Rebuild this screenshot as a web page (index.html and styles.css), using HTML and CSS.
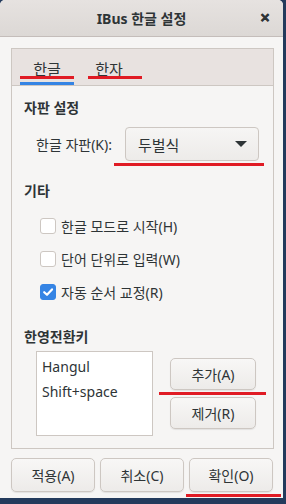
FILE: index.html
```html
<!DOCTYPE html>
<html lang="ko">
<head>
    <meta charset="UTF-8">
    <title>IBus 한글 설정</title>
    <link rel="stylesheet" href="styles.css">
</head>
<body>

<div class="window">
    <div class="titlebar">
        <span class="title">IBus 한글 설정</span>
        <span class="close">&#x2715;</span>
    </div>

    <div class="content">
        <div class="notebook">
            <div class="tabs">
                <div class="tab active marked">한글</div>
                <div class="tab marked">한자</div>
            </div>

            <div class="page">
                <h2>자판 설정</h2>
                <div class="row">
                    <span class="label">한글 자판(K):</span>
                    <div class="combo marked-wide">
                        <span>두벌식</span>
                        <span class="arrow"></span>
                    </div>
                </div>

                <h2 class="section">기타</h2>
                <ul class="checks">
                    <li><span class="box"></span>한글 모드로 시작(H)</li>
                    <li><span class="box"></span>단어 단위로 입력(W)</li>
                    <li><span class="box checked">
                        <svg width="12" height="12" viewBox="0 0 12 12"><path d="M2.2 6.2 L5 8.8 L10 3.4" fill="none" stroke="#fff" stroke-width="2.2" stroke-linecap="round" stroke-linejoin="round"/></svg>
                    </span>자동 순서 교정(R)</li>
                </ul>

                <h2 class="section keys">한영전환키</h2>
                <div class="keyrow">
                    <div class="keylist">
                        <div>Hangul</div>
                        <div>Shift+space</div>
                    </div>
                    <div class="keybtns">
                        <button class="marked-btn">추가(A)</button>
                        <button>제거(R)</button>
                    </div>
                </div>
            </div>
        </div>

        <div class="actions">
            <button>적용(A)</button>
            <button>취소(C)</button>
            <button class="marked-ok">확인(O)</button>
        </div>
    </div>
</div>

</body>
</html>
```

FILE: styles.css
```css
body {
    margin: 0;
    background-color: #233a5c;
    font-family: "Noto Sans", "Noto Sans CJK KR", sans-serif;
    font-size: 14px;
    color: #2e3436;
}
.window {
    width: 283px;
    height: 498px;
    background-color: #f6f5f4;
    border-radius: 5px 5px 0 0;
    overflow: hidden;
    display: flex;
    flex-direction: column;
}
.titlebar {
    height: 36px;
    flex: none;
    position: relative;
    display: flex;
    align-items: center;
    justify-content: center;
    background: linear-gradient(#e6e2e0, #dcd8d5);
    border-bottom: 1px solid #c4bdba;
}
.title {
    font-weight: bold;
    font-size: 14px;
}
.close {
    position: absolute;
    right: 13px;
    top: 9px;
    font-size: 12px;
    font-weight: bold;
    color: #2e3436;
    -webkit-text-stroke: 0.6px #2e3436;
}
.content {
    flex: 1;
    padding: 11px 9px 0 11px;
    display: flex;
    flex-direction: column;
}
.notebook {
    border: 1px solid #cdc7c2;
    height: 401px;
    box-sizing: border-box;
    display: flex;
    flex-direction: column;
}
.tabs {
    height: 37px;
    flex: none;
    background-color: #e8e2e0;
    border-bottom: 1px solid #cdc7c2;
    display: flex;
    padding-left: 8px;
    box-sizing: border-box;
}
.tab {
    position: relative;
    width: 54px;
    text-align: center;
    padding-top: 9px;
    font-size: 15px;
    margin-right: 8px;
}
.tab.active {
    box-shadow: inset 0 -3px 0 #3584e4;
}
.tab.marked::after {
    content: "";
    position: absolute;
    left: 0;
    right: 0;
    bottom: 6px;
    height: 3px;
    background-color: #e01b24;
}
.tab + .tab.marked::after {
    left: 6px;
    right: -6px;
}
.page {
    padding: 11px 12px 0 12px;
}
h2 {
    margin: 0;
    font-size: 14px;
    font-weight: bold;
    line-height: 22px;
}
.section {
    margin-top: 19px;
}
.row {
    display: flex;
    align-items: center;
    margin-top: 8px;
    padding-left: 12px;
}
.label {
    width: 89px;
}
.combo {
    position: relative;
    width: 134px;
    height: 34px;
    box-sizing: border-box;
    border: 1px solid #cdc7c2;
    border-radius: 4px;
    background: linear-gradient(#f6f5f4, #edebe9);
    display: flex;
    align-items: center;
    justify-content: space-between;
    padding: 0 11px 0 12px;
    font-size: 15px;
}
.arrow {
    width: 0;
    height: 0;
    border-left: 6px solid transparent;
    border-right: 6px solid transparent;
    border-top: 6px solid #2e3436;
}
.marked-wide::after {
    content: "";
    position: absolute;
    left: -12px;
    right: -6px;
    bottom: -6px;
    height: 3px;
    background-color: #e01b24;
}
.checks {
    list-style: none;
    margin: 7px 0 0 0;
    padding: 0 0 0 16px;
}
.checks li {
    display: flex;
    align-items: center;
    height: 33px;
}
.box {
    width: 14px;
    height: 14px;
    border: 1px solid #cdc7c2;
    border-radius: 3px;
    background-color: #fff;
    margin-right: 5px;
    display: flex;
    align-items: center;
    justify-content: center;
}
.box.checked {
    background-color: #3584e4;
    border-color: #3584e4;
}
.keys {
    margin-top: 18px;
}
.keyrow {
    display: flex;
    margin-top: 3px;
    padding-left: 12px;
}
.keylist {
    width: 117px;
    height: 85px;
    box-sizing: border-box;
    border: 1px solid #cdc7c2;
    background-color: #fff;
    padding: 2px 5px;
    line-height: 25px;
}
.keybtns {
    display: flex;
    flex-direction: column;
    gap: 7px;
    margin-left: 17px;
    margin-top: 7px;
}
button {
    font-family: inherit;
    font-size: 14px;
    color: #2e3436;
    border: 1px solid #cdc7c2;
    border-radius: 5px;
    background: linear-gradient(#f8f7f6, #edebe9);
    box-shadow: 0 1px 1px rgba(0, 0, 0, 0.08);
    position: relative;
}
.keybtns button {
    width: 86px;
    height: 32px;
}
.marked-btn::after {
    content: "";
    position: absolute;
    left: -12px;
    right: -11px;
    bottom: -6px;
    height: 3px;
    background-color: #e01b24;
}
.actions {
    display: flex;
    gap: 5px;
    margin-top: 9px;
}
.actions button {
    width: 84px;
    height: 34px;
}
.marked-ok::after {
    content: "";
    position: absolute;
    left: -4px;
    right: -9px;
    bottom: -6px;
    height: 3px;
    background-color: #e01b24;
}
```
